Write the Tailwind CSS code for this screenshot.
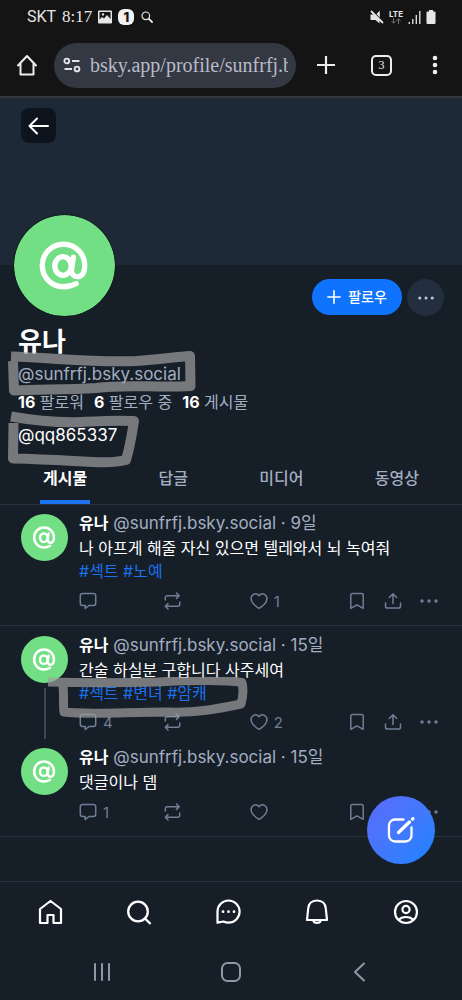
<!DOCTYPE html>
<html lang="ko">
<head>
<meta charset="utf-8">
<meta name="viewport" content="width=device-width, initial-scale=1">
<title>유나 (@sunfrfj.bsky.social)</title>
<script src="https://cdn.jsdelivr.net/npm/@tailwindcss/browser@4"></script>
</head>
<body class="bg-[#161e28] text-white font-['Inter','Noto_Sans_CJK_KR',sans-serif]">
<svg class="hidden" aria-hidden="true">
  <symbol id="at" viewBox="0 0 102 102"><circle cx="51" cy="51" r="51" fill="#73df84"/><g fill="none" stroke="#fff" stroke-width="5.4" stroke-linecap="round" stroke-linejoin="round"><ellipse cx="49.5" cy="51.5" rx="8.3" ry="9.4"/><path d="M60 42.5 58.2 54.5C57.6 59 60 62.3 64 62.3c5 0 7.5-4.800 7.500-11.3A21.500 21.500 0 1 0 50 72.500c5 0 8.800-1 12.800-3.300"/></g></symbol>
  <symbol id="reply" viewBox="0 0 18 18"><path d="M3.500 1.500h11a2.200 2.200 0 0 1 2.200 2.200v7.600a2.200 2.200 0 0 1-2.200 2.200H10l-3.800 3v-3H3.500a2.200 2.200 0 0 1-2.200-2.200V3.700a2.200 2.200 0 0 1 2.200-2.200Z" fill="none" stroke="currentColor" stroke-width="1.500" stroke-linejoin="round"/></symbol>
  <symbol id="repost" viewBox="0 0 18 18"><path d="M1.300 8V5.700a2 2 0 0 1 2-2H15M12.500 1l2.700 2.700-2.700 2.700M15.700 10v2.300a2 2 0 0 1-2 2H1.500M4 11.600l-2.700 2.700L4 17" fill="none" stroke="currentColor" stroke-width="1.500" stroke-linecap="round" stroke-linejoin="round"/></symbol>
  <symbol id="heart" viewBox="0 0 18 18"><path d="M9 3.700C7.500 1.800 5.300 1.400 3.500 2.400 1.200 3.700.6 6.600 1.700 9.200c1.100 2.700 3.700 5 7.300 7.100 3.600-2.100 6.200-4.400 7.300-7.100 1.100-2.600.5-5.500-1.800-6.800C12.700 1.400 10.500 1.800 9 3.700Z" fill="none" stroke="currentColor" stroke-width="1.500" stroke-linejoin="round"/></symbol>
  <symbol id="save" viewBox="0 0 18 18"><path d="M4.300 1.500h9.400a1.500 1.500 0 0 1 1.500 1.500v13.300L9 12.800l-6.200 3.500V3a1.500 1.500 0 0 1 1.500-1.500Z" fill="none" stroke="currentColor" stroke-width="1.500" stroke-linejoin="round"/></symbol>
  <symbol id="share" viewBox="0 0 18 18"><path d="M9 11.500V2M5.300 5.500 9 1.800l3.700 3.700M1.500 11v3.200a1.800 1.800 0 0 0 1.800 1.800h11.400a1.800 1.800 0 0 0 1.800-1.800V11" fill="none" stroke="currentColor" stroke-width="1.500" stroke-linecap="round" stroke-linejoin="round"/></symbol>
  <symbol id="dots" viewBox="0 0 18 18"><g fill="currentColor"><circle cx="2" cy="9" r="1.700"/><circle cx="9" cy="9" r="1.700"/><circle cx="16" cy="9" r="1.700"/></g></symbol>
</svg>

<div class="flex min-h-screen flex-col">
  <header class="border-b-2 border-[#33363c] bg-[#141414]">
    <div class="flex h-[34px] items-center justify-between pl-[27px] pr-[26px] text-[#e6e6e6]">
      <div class="flex items-center gap-[6px]">
        <span class="font-['Roboto','Liberation_Sans',sans-serif] text-[16px] leading-5">SKT</span>
        <span class="font-['Liberation_Serif',serif] text-[17px] leading-5">8:17</span>
        <svg class="size-[14px]" viewBox="0 0 14 14"><path fill-rule="evenodd" fill="currentColor" d="M1 .5h12a1 1 0 0 1 1 1v11a1 1 0 0 1-1 1H1a1 1 0 0 1-1-1v-11a1 1 0 0 1 1-1ZM1.500 2v7.500L4 7l2 1.500L9 5l3.500 4V2ZM5 3.200a1.200 1.200 0 1 1 0 2.400 1.200 1.200 0 0 1 0-2.400Z"/></svg>
        <span class="grid size-4 place-items-center rounded-[6px] bg-[#f1f1f1] text-[13px] leading-4 font-extrabold text-[#141414]">1</span>
        <svg class="size-3 ml-px" viewBox="0 0 12 12" fill="none" stroke="currentColor" stroke-width="1.200" stroke-linecap="round"><circle cx="4.800" cy="4.800" r="3.800"/><path d="m7.700 7.700 3.300 3.300" stroke-width="1.800"/></svg>
      </div>
      <div class="flex items-center gap-[5px]">
        <svg class="size-[14px]" viewBox="0 0 14 14"><path fill="currentColor" d="M.5 4.500H4L9.500 10v3.500L5.500 10h-5ZM6.500 4 9.800.8v6.700Z"/><path d="m1 1 12 12" stroke="currentColor" stroke-width="1.800"/></svg>
        <span class="flex flex-col items-center"><span class="text-[8px] leading-2 font-bold">LTE</span>
        <svg class="h-[6px] w-[10px]" viewBox="0 0 10 6" fill="none" stroke="#777" stroke-width="1"><path d="M2.500 0v5M.5 3.200l2 2 2-2M7.500 6V1M5.500 2.800l2-2 2 2"/></svg></span>
        <svg class="h-[14px] w-[13px]" viewBox="0 0 13 14" stroke="currentColor" stroke-width="1.300"><path d="M1.300 14v-2M4.800 14V9M8.300 14V5M11.800 14V1"/></svg>
        <svg class="h-[14px] w-[10px]" viewBox="0 0 10 14" fill="currentColor"><path d="M3 0h4v1.500h1.500A1 1 0 0 1 9.500 2.500V13a1 1 0 0 1-1 1h-7a1 1 0 0 1-1-1V2.500a1 1 0 0 1 1-1H3Z"/></svg>
      </div>
    </div>
    <div class="flex h-[62px] items-center pl-4 pr-[22px] text-[#ededed]">
      <button aria-label="홈페이지" class="mr-4"><svg class="size-[22px]" viewBox="0 0 22 22" fill="none" stroke="currentColor" stroke-width="2" stroke-linejoin="round" stroke-linecap="round"><path d="M2 11.500 11 2l9 9.500M4.500 9.500v11h13v-11"/></svg></button>
      <label class="flex h-[45px] min-w-0 flex-1 items-center rounded-full bg-[#343842] pl-[9px] pr-2">
        <svg class="mr-[9px] size-[18px] shrink-0" viewBox="0 0 18 18" fill="none" stroke="#e3e4ea" stroke-width="1.900"><circle cx="3.800" cy="5" r="2.400"/><path d="M9 5h7.500M1.500 13h7.500"/><circle cx="14" cy="13" r="2.400"/></svg>
        <input type="text" aria-label="주소" value="bsky.app/profile/sunfrfj.bsky.social" class="w-full min-w-0 bg-transparent font-['Liberation_Serif',serif] text-[20px] leading-6 text-[#b9bcc8] outline-none">
      </label>
      <button aria-label="새 탭" class="ml-5"><svg class="size-5" viewBox="0 0 20 20" stroke="currentColor" stroke-width="2.200"><path d="M10 1v18M1 10h18"/></svg></button>
      <button aria-label="탭 3개" class="ml-[35px] grid size-[21px] place-items-center rounded-[5px] border-2 border-[#ededed] font-['Liberation_Serif',serif] text-[12px] leading-4">3</button>
      <button aria-label="메뉴" class="ml-[38px]"><svg class="h-5 w-[10px]" viewBox="0 0 10 20" fill="currentColor"><circle cx="5" cy="3" r="2.300"/><circle cx="5" cy="10" r="2.300"/><circle cx="5" cy="17" r="2.300"/></svg></button>
    </div>
  </header>

  <main class="flex-1">
    <div class="h-[167px] bg-[#1d2936] pl-[21px] pt-[10px]">
      <button aria-label="뒤로" class="grid size-[35px] place-items-center rounded-[8px] bg-[#0e141e]"><svg class="size-[22px]" viewBox="0 0 22 22" fill="none" stroke="#fff" stroke-width="2" stroke-linecap="round" stroke-linejoin="round"><path d="M20 11H2M9 3.500 1.500 11 9 18.500"/></svg></button>
    </div>
    <section>
      <div class="flex items-start justify-between pl-[13px] pr-[18px]">
        <svg class="-mt-[51px] size-[103px] rounded-full border border-[#10201d]" role="img" aria-label="유나"><use href="#at"/></svg>
        <div class="mt-[14px] flex gap-[5px]">
          <button class="flex h-[36px] w-[90px] items-center justify-center gap-[7px] rounded-full bg-[#1073fe] text-[14px] leading-5 font-medium"><svg class="size-[14px]" viewBox="0 0 13 13" stroke="#fff" stroke-width="1.500" stroke-linecap="round"><path d="M6.500.800v11.400M.800 6.500h11.400"/></svg>팔로우</button>
          <button aria-label="더 보기" class="grid size-[37px] place-items-center rounded-full bg-[#232e3e] text-[#c3cad8]"><svg class="size-4"><use href="#dots"/></svg></button>
        </div>
      </div>
      <div class="px-[18px]">
        <h1 class="mt-[9px] text-[26px] leading-8 font-bold">유나</h1>
        <div class="relative mt-[4px] text-[17px] leading-6 text-[#a3aec0]">@sunfrfj.bsky.social
          <svg class="absolute -left-[12px] -top-[14px] h-[50px] w-[196px]" viewBox="0 0 196 50" fill="none" stroke="#a09ea0" stroke-opacity=".7" stroke-width="10" stroke-linejoin="round"><path d="M5 8.500C50 10 90 15 130 13 155 11 170 9 184 8L184.500 38C150 40 120 36 90 40 60 42 30 41 8 42.500L7 13"/></svg>
        </div>
        <p class="mt-[4px] flex gap-[10px] text-[16px] leading-6 text-[#a3aec0]"><span><b class="text-white">16</b> 팔로워</span><span><b class="text-white">6</b> 팔로우 중</span><span><b class="text-white">16</b> 게시물</span></p>
        <div class="relative mt-[9px] text-[17px] leading-6">@qq865337
          <svg class="absolute -left-[12px] -top-[14px] h-[60px] w-[136px]" viewBox="0 0 136 60" fill="none" stroke="#a09ea0" stroke-opacity=".7" stroke-width="10" stroke-linejoin="round"><path d="M5 7.500C25 11 50 14 75 13 95 12 112 11 128 12 126 25 124 38 120 51 100 56 75 51 7 49.500L7.500 14"/></svg>
        </div>
      </div>
      <nav class="mt-[8px] flex justify-between border-b border-[#29323e] px-[43px] text-[16px] leading-6 font-medium text-[#a3aec0]" aria-label="프로필 탭">
        <button class="relative pt-[11px] pb-[14px] font-bold text-white">게시물<span class="absolute bottom-0 -left-[3px] -right-[3px] h-1 bg-[#1e73f2]"></span></button>
        <button class="pt-[11px] pb-[14px]">답글</button>
        <button class="pt-[11px] pb-[14px]">미디어</button>
        <button class="pt-[11px] pb-[14px]">동영상</button>
      </nav>
    </section>

    <article class="flex gap-[11px] border-b border-[#29323e] pl-[21px] pr-6 pt-[7px] pb-[14px]">
      <svg class="mt-[2px] size-[47px] shrink-0" role="img" aria-label="유나"><use href="#at"/></svg>
      <div class="min-w-0 flex-1 text-[16px] leading-[23px]">
        <p class="text-[17px] text-[#a3aec0]"><b class="text-[16px] text-white">유나</b> @sunfrfj.bsky.social · 9일</p>
        <p class="mt-[2px]">나 아프게 해줄 자신 있으면 텔레와서 뇌 녹여줘</p>
        <p class="text-[#1c70ec]"><a href="#">#섹트</a> <a href="#">#노예</a></p>
        <div class="mt-2 flex h-5 items-center text-[15px] text-[#6f7f96]">
          <div class="grid flex-1 grid-cols-3">
            <button aria-label="답글" class="flex items-center gap-[6px]"><svg class="size-[18px]"><use href="#reply"/></svg></button>
            <button aria-label="재게시" class="flex items-center gap-[6px]"><svg class="size-[18px]"><use href="#repost"/></svg></button>
            <button aria-label="좋아요" class="flex items-center gap-[6px]"><svg class="size-[18px]"><use href="#heart"/></svg>1</button>
          </div>
          <div class="flex gap-[18px] pl-[13px]">
            <button aria-label="저장"><svg class="size-[18px]"><use href="#save"/></svg></button>
            <button aria-label="공유"><svg class="size-[18px]"><use href="#share"/></svg></button>
            <button aria-label="더 보기"><svg class="size-[18px]"><use href="#dots"/></svg></button>
          </div>
        </div>
      </div>
    </article>

    <article class="flex gap-[11px] pl-[21px] pr-6">
      <div class="flex shrink-0 flex-col items-center pt-[10px]">
        <svg class="size-[47px]" role="img" aria-label="유나"><use href="#at"/></svg>
        <span class="mt-[5px] w-[2px] flex-1 bg-[#3c4858]"></span>
      </div>
      <div class="min-w-0 flex-1 pt-[8px] pb-[7px] text-[16px] leading-[23px]">
        <p class="text-[17px] text-[#a3aec0]"><b class="text-[16px] text-white">유나</b> @sunfrfj.bsky.social · 15일</p>
        <p class="mt-[2px]">간술 하실분 구합니다 사주세여</p>
        <div class="relative text-[#1c70ec]"><a href="#">#섹트</a> <a href="#">#변녀</a> <a href="#">#암캐</a>
          <svg class="absolute -left-[32px] -top-[5px] h-[44px] w-[202px]" viewBox="0 0 202 44" fill="none" stroke="#a09ea0" stroke-opacity=".7" stroke-width="9" stroke-linejoin="round"><path d="M1 5C40 6 70 6 110 5 150 3 180 3 195 5.500 197 14 196 20 194 27 170 32 150 36 120 35 80 35 40 38 17 35 16 26 17 18 16 9"/></svg>
        </div>
        <div class="mt-[7px] flex h-5 items-center text-[15px] text-[#6f7f96]">
          <div class="grid flex-1 grid-cols-3">
            <button aria-label="답글" class="flex items-center gap-[6px]"><svg class="size-[18px]"><use href="#reply"/></svg>4</button>
            <button aria-label="재게시" class="flex items-center gap-[6px]"><svg class="size-[18px]"><use href="#repost"/></svg></button>
            <button aria-label="좋아요" class="flex items-center gap-[6px]"><svg class="size-[18px]"><use href="#heart"/></svg>2</button>
          </div>
          <div class="flex gap-[18px] pl-[13px]">
            <button aria-label="저장"><svg class="size-[18px]"><use href="#save"/></svg></button>
            <button aria-label="공유"><svg class="size-[18px]"><use href="#share"/></svg></button>
            <button aria-label="더 보기"><svg class="size-[18px]"><use href="#dots"/></svg></button>
          </div>
        </div>
      </div>
    </article>

    <article class="flex gap-[11px] border-b border-[#29323e] pl-[21px] pr-6 pt-[7px] pb-[14px]">
      <svg class="mt-[2px] size-[47px] shrink-0" role="img" aria-label="유나"><use href="#at"/></svg>
      <div class="min-w-0 flex-1 text-[16px] leading-[23px]">
        <p class="text-[17px] text-[#a3aec0]"><b class="text-[16px] text-white">유나</b> @sunfrfj.bsky.social · 15일</p>
        <p class="mt-[2px]">댓글이나 뎀</p>
        <div class="mt-2 flex h-5 items-center text-[15px] text-[#6f7f96]">
          <div class="grid flex-1 grid-cols-3">
            <button aria-label="답글" class="flex items-center gap-[6px]"><svg class="size-[18px]"><use href="#reply"/></svg>1</button>
            <button aria-label="재게시" class="flex items-center gap-[6px]"><svg class="size-[18px]"><use href="#repost"/></svg></button>
            <button aria-label="좋아요" class="flex items-center gap-[6px]"><svg class="size-[18px]"><use href="#heart"/></svg></button>
          </div>
          <div class="flex gap-[18px] pl-[13px]">
            <button aria-label="저장"><svg class="size-[18px]"><use href="#save"/></svg></button>
            <button aria-label="공유"><svg class="size-[18px]"><use href="#share"/></svg></button>
            <button aria-label="더 보기"><svg class="size-[18px]"><use href="#dots"/></svg></button>
          </div>
        </div>
      </div>
    </article>
  </main>

  <footer class="relative border-t border-[#29323e]">
    <button aria-label="새 게시물" class="absolute bottom-full right-[27px] mb-[18px] grid size-[68px] place-items-center rounded-full bg-linear-to-br from-[#5a6bfa] to-[#0a84ff]"><svg class="size-7" viewBox="0 0 28 28" fill="none" stroke="#fff" stroke-width="2.300" stroke-linecap="round"><path d="M16.500 3.500H8a6 6 0 0 0-6 6v10a6 6 0 0 0 6 6h10.500a6 6 0 0 0 6-6v-8"/><path d="M11.500 16.500 22.500 6M26 2.600l-.400.400" stroke-width="3.200"/></svg></button>
    <nav class="flex h-[60px] items-center justify-between pl-[37px] pr-[43px]" aria-label="주 메뉴">
      <button aria-label="홈"><svg class="size-[26px]" viewBox="0 0 26 26" fill="none" stroke="#fff" stroke-width="2.200" stroke-linejoin="round"><path d="M13.500 2 24 10V24h-7.500v-8h-6v8H3V10Z"/></svg></button>
      <button aria-label="검색"><svg class="size-[26px]" viewBox="0 0 26 26" fill="none" stroke="#fff" stroke-width="2.300" stroke-linecap="round"><circle cx="12" cy="12.500" r="9.800"/><path d="m19 19.500 5 4.800"/></svg></button>
      <button aria-label="채팅"><svg class="size-[26px]" viewBox="0 0 26 26" fill="none" stroke="#fff" stroke-width="2.200" stroke-linejoin="round"><path d="M13.500 1.500A11 11 0 0 1 13.500 23.700c-2 0-3.500-.400-5-1.200L2.500 23.700V12.500A11 11 0 0 1 13.500 1.500Z"/><path d="M8 12.700h.010M13.500 12.700h.010M19 12.700h.010" stroke-linecap="round" stroke-width="2.800"/></svg></button>
      <button aria-label="알림"><svg class="size-[26px]" viewBox="0 0 26 26" fill="none" stroke="#fff" stroke-width="2.200" stroke-linejoin="round"><path d="M13 1.500C7.500 1.500 4.500 5 4.200 9.500L3 21h20L21.800 9.500C21.500 5 18.500 1.500 13 1.500Z"/><path d="M9.300 21.500c.800 3.200 6.600 3.200 7.400 0"/></svg></button>
      <button aria-label="프로필"><svg class="size-[26px]" viewBox="0 0 26 26" fill="none" stroke="#fff" stroke-width="2.200"><circle cx="13" cy="13" r="11"/><circle cx="13" cy="10.500" r="3.600"/><path d="M5.500 21c3.500-4 11.500-4 15 0"/></svg></button>
    </nav>
    <nav class="flex h-[58px] items-center justify-between px-[92px] pt-[2px]" aria-label="시스템 탐색">
      <button aria-label="최근 앱"><svg class="size-5" viewBox="0 0 20 20" stroke="#9298a3" stroke-width="2" stroke-linecap="round"><path d="M3 2v16M10 2v16M17 2v16"/></svg></button>
      <button aria-label="홈 화면"><svg class="size-5" viewBox="0 0 20 20" fill="none" stroke="#9298a3" stroke-width="2"><rect x="1" y="1" width="18" height="18" rx="5.500"/></svg></button>
      <button aria-label="이전"><svg class="size-5" viewBox="0 0 20 20" fill="none" stroke="#9298a3" stroke-width="2" stroke-linecap="round" stroke-linejoin="round"><path d="M14 1.500 5 10l9 8.500"/></svg></button>
    </nav>
  </footer>
</div>
</body>
</html>
